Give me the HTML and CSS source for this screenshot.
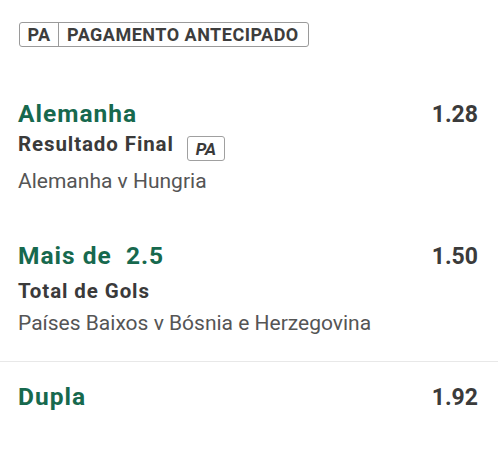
FILE: index.html
```html
<!DOCTYPE html>
<html lang="pt">
<head>
<meta charset="utf-8">
<link rel="stylesheet" href="styles.css">
</head>
<body>
<div class="top">
  <div class="badge"><span class="badge-pa">PA</span><span class="badge-label">PAGAMENTO ANTECIPADO</span></div>
</div>
<div class="bet bet-first">
  <div class="row"><span class="sel">Alemanha</span><span class="odds">1.28</span></div>
  <div class="market market-badge"><span>Resultado Final</span><span class="mini-pa">PA</span></div>
  <div class="event">Alemanha v Hungria</div>
</div>
<div class="bet bet-second">
  <div class="row"><span class="sel">Mais de&nbsp; 2.5</span><span class="odds">1.50</span></div>
  <div class="market">Total de Gols</div>
  <div class="event">Países Baixos v Bósnia e Herzegovina</div>
</div>
<div class="divider"></div>
<div class="bet bet-last">
  <div class="row"><span class="sel">Dupla</span><span class="odds">1.92</span></div>
</div>
</body>
</html>
```
FILE: styles.css
```css
html, body {
  margin: 0;
  padding: 0;
  background: #fff;
  font-family: Roboto, "Noto Sans", sans-serif;
  color: #3a3a3a;
}
.top {
  padding: 22px 0 0 19px;
  display: flex;
}
.badge {
  display: flex;
  box-sizing: border-box;
  height: 25px;
  border: 1px solid #9a9a9a;
  border-radius: 3px;
  font-weight: 700;
  font-size: 18px;
  line-height: 23px;
  letter-spacing: 0.5px;
  color: #3d3d3d;
}
.badge-pa {
  width: 38px;
  text-align: center;
  border-right: 1px solid #9a9a9a;
}
.badge-label {
  padding: 0 9px 0 8px;
}
.bet {
  padding: 0 20px 0 18px;
}
.bet-first {
  margin-top: 52px;
}
.bet-second {
  margin-top: 45px;
}
.row {
  display: flex;
  justify-content: space-between;
  align-items: baseline;
  line-height: 30px;
}
.sel {
  color: #17694e;
  font-weight: 700;
  font-size: 24.5px;
  letter-spacing: 1px;
}
.odds {
  color: #3b3b3b;
  font-weight: 700;
  font-size: 23px;
}
.market {
  font-weight: 700;
  font-size: 20.5px;
  line-height: 28px;
  letter-spacing: 0.9px;
  color: #3a3a3a;
  margin-top: 5px;
}
.market-badge {
  display: flex;
  align-items: flex-start;
  margin-top: 0;
  padding-bottom: 5px;
}
.mini-pa {
  box-sizing: border-box;
  height: 25px;
  margin: 6px 0 -3px 13px;
  padding: 1px 8px 0 8px;
  line-height: 22px;
  border: 1px solid #a0a0a0;
  border-radius: 3px;
  font-style: italic;
  font-size: 17px;
  letter-spacing: 0;
}
.event {
  font-size: 21px;
  line-height: 30px;
  color: #555;
  margin-top: 3px;
}
.divider {
  height: 1px;
  background: #e8e8e8;
  margin-top: 23px;
}
.bet-last {
  margin-top: 20px;
}
```
